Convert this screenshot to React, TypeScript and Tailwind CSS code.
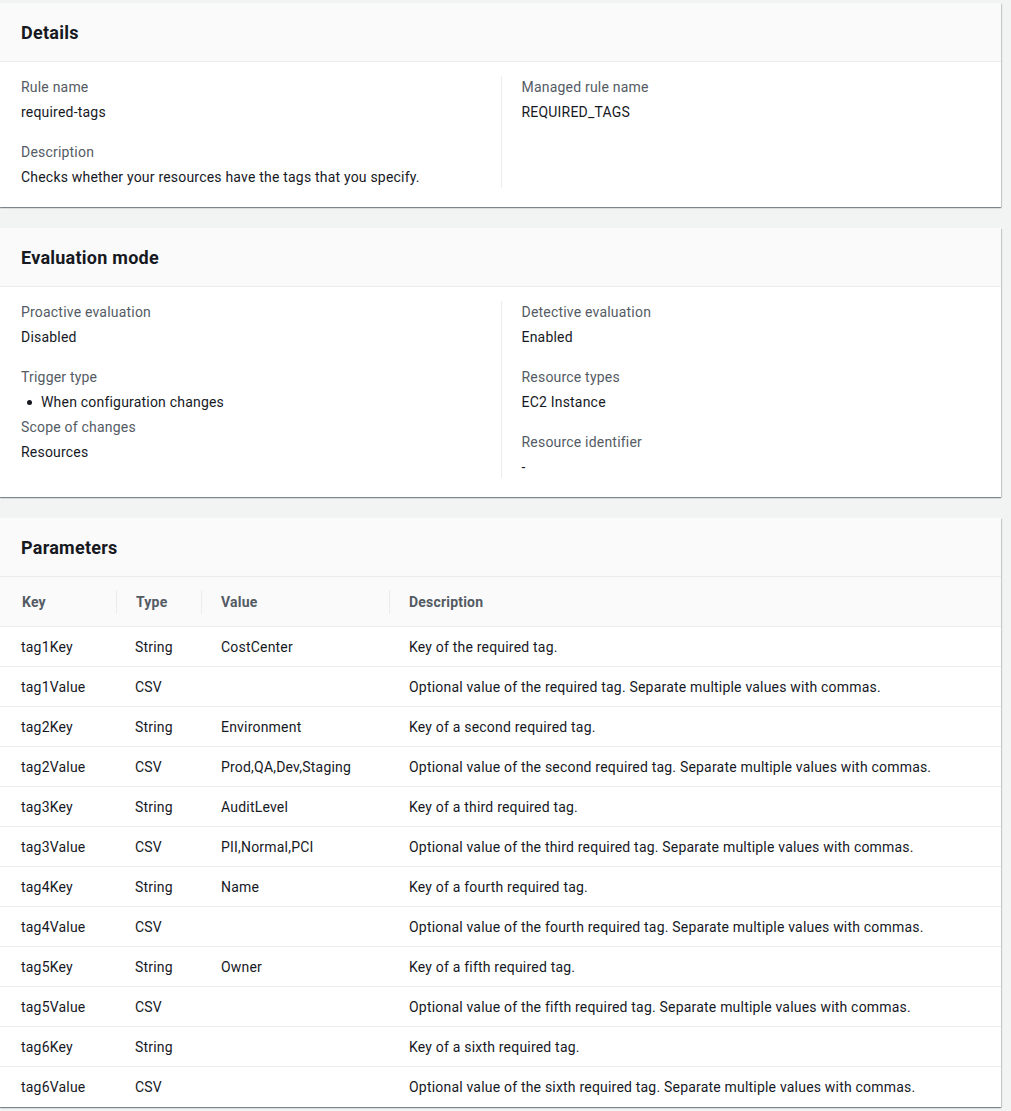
import React from "react";

const font = { fontFamily: "Roboto, 'Noto Sans', Arial, sans-serif" };

function Card({ title, children }: { title: string; children: React.ReactNode }) {
  return (
    <div className="bg-white shadow-[0_1px_1px_0_rgba(0,28,36,0.3),1px_1px_1px_0_rgba(0,28,36,0.15),-1px_1px_1px_0_rgba(0,28,36,0.15)]">
      <div className="h-[59px] bg-[#fafafa] border-b border-[#eaeded] px-[21px] pt-[2px] flex items-center">
        <h2 className="text-[18px] leading-[22px] font-bold tracking-[0.25px] text-[#16191f]">{title}</h2>
      </div>
      {children}
    </div>
  );
}

function Label({ children }: { children: React.ReactNode }) {
  return <div className="text-[14px] leading-[22px] text-[#545b64]">{children}</div>;
}
function Value({ children }: { children: React.ReactNode }) {
  return <div className="text-[14px] leading-[22px] text-[#16191f]">{children}</div>;
}
function Pair({ label, value }: { label: string; value: string }) {
  return (
    <div className="flex flex-col gap-[3px]">
      <Label>{label}</Label>
      <Value>{value}</Value>
    </div>
  );
}

const rows: [string, string, string, string][] = [
  ["tag1Key", "String", "CostCenter", "Key of the required tag."],
  ["tag1Value", "CSV", "", "Optional value of the required tag. Separate multiple values with commas."],
  ["tag2Key", "String", "Environment", "Key of a second required tag."],
  ["tag2Value", "CSV", "Prod,QA,Dev,Staging", "Optional value of the second required tag. Separate multiple values with commas."],
  ["tag3Key", "String", "AuditLevel", "Key of a third required tag."],
  ["tag3Value", "CSV", "PII,Normal,PCI", "Optional value of the third required tag. Separate multiple values with commas."],
  ["tag4Key", "String", "Name", "Key of a fourth required tag."],
  ["tag4Value", "CSV", "", "Optional value of the fourth required tag. Separate multiple values with commas."],
  ["tag5Key", "String", "Owner", "Key of a fifth required tag."],
  ["tag5Value", "CSV", "", "Optional value of the fifth required tag. Separate multiple values with commas."],
  ["tag6Key", "String", "", "Key of a sixth required tag."],
  ["tag6Value", "CSV", "", "Optional value of the sixth required tag. Separate multiple values with commas."],
];

function HeadCell({ children, first }: { children: React.ReactNode; first?: boolean }) {
  return (
    <div className="flex items-center h-full">
      {!first && <div className="w-px h-[24px] bg-[#eaeded]" />}
      <div className={`${first ? "pl-[22px]" : "pl-[19px]"} text-[14px] leading-[22px] font-bold tracking-[0.2px] text-[#545b64]`}>{children}</div>
    </div>
  );
}

export default function App() {
  return (
    <div className="min-h-[1111px] bg-[#f2f3f3] pt-[3px] pr-[10px] pb-[4px] tracking-[0.2px]" style={font}>
      <div className="flex flex-col gap-[21px]">
        <Card title="Details">
          <div className="grid grid-cols-2 px-[21px] pt-[14px] pb-[19px]">
            <div className="flex flex-col gap-[18px] pr-[20px]">
              <Pair label="Rule name" value="required-tags" />
              <Pair label="Description" value="Checks whether your resources have the tags that you specify." />
            </div>
            <div className="border-l border-[#eaeded] pl-[20px] flex flex-col gap-[18px]">
              <Pair label="Managed rule name" value="REQUIRED_TAGS" />
            </div>
          </div>
        </Card>

        <Card title="Evaluation mode">
          <div className="grid grid-cols-2 px-[21px] pt-[14px] pb-[19px]">
            <div className="flex flex-col gap-[18px] pr-[20px]">
              <Pair label="Proactive evaluation" value="Disabled" />
              <div className="flex flex-col gap-[3px]">
                <Label>Trigger type</Label>
                <ul className="text-[14px] leading-[22px] text-[#16191f]">
                  <li className="flex items-center">
                    <span className="w-[20px] flex justify-start pl-[6px]">
                      <span className="block w-[5px] h-[5px] rounded-full bg-[#16191f]" />
                    </span>
                    When configuration changes
                  </li>
                </ul>
                <Label>Scope of changes</Label>
                <Value>Resources</Value>
              </div>
            </div>
            <div className="border-l border-[#eaeded] pl-[20px] flex flex-col gap-[18px]">
              <Pair label="Detective evaluation" value="Enabled" />
              <Pair label="Resource types" value="EC2 Instance" />
              <Pair label="Resource identifier" value="-" />
            </div>
          </div>
        </Card>

        <Card title="Parameters">
          <div>
            <div className="grid grid-cols-[116px_85px_188px_1fr] h-[50px] bg-[#fafafa] border-b border-[#eaeded]">
              <HeadCell first>Key</HeadCell>
              <HeadCell>Type</HeadCell>
              <HeadCell>Value</HeadCell>
              <HeadCell>Description</HeadCell>
            </div>
            {rows.map((r, i) => (
              <div
                key={r[0]}
                className={`grid grid-cols-[116px_85px_188px_1fr] h-[40px] items-center text-[14px] leading-[22px] text-[#16191f] ${i < rows.length - 1 ? "border-b border-[#eaeded]" : ""}`}
              >
                <div className="pl-[21px]">{r[0]}</div>
                <div className="pl-[19px]">{r[1]}</div>
                <div className="pl-[20px]">{r[2]}</div>
                <div className="pl-[20px]">{r[3]}</div>
              </div>
            ))}
          </div>
        </Card>
      </div>
    </div>
  );
}
